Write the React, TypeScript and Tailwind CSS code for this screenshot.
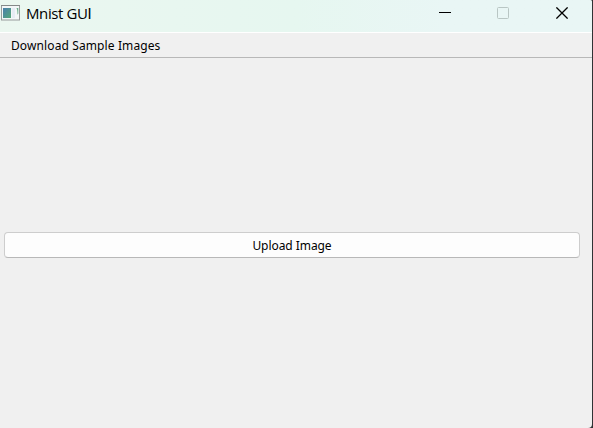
function AppIcon() {
  return (
    <svg className="mb-px ml-px h-[16px] w-[19px] shrink-0" viewBox="0 0 19 16">
      <defs>
        <linearGradient id="pane" x1="0" y1="0" x2="1" y2="1">
          <stop offset="0" stopColor="#4a7fae" />
          <stop offset="1" stopColor="#55a878" />
        </linearGradient>
      </defs>
      <rect x="0.5" y="0.5" width="18" height="14.5" fill="#f3f7f8" stroke="#989c9c" />
      <path d="M0 .5h19" stroke="#858989" />
      <rect x="2" y="3" width="8" height="10" fill="url(#pane)" />
      <rect x="11" y="3" width="3" height="10" fill="#e6ecf5" />
      <path d="M15.5 3h1.8v5.5l-.8 1.2c0-3-.2-5-1-6.7z" fill="#6aae8a" />
    </svg>
  );
}

function TitleBar() {
  return (
    <header className="flex h-8 shrink-0 items-start bg-linear-to-r from-[#ebf7f0] via-[#e6f7f0] via-50% to-[#e9f6f5] to-75%">
      <div className="flex h-[27px] flex-1 items-center">
        <AppIcon />
        <h1 className="ml-1.5 whitespace-nowrap font-['Open_Sans',sans-serif] text-[15px] leading-[27px] tracking-[-0.4px] text-black">
          Mnist GU<span className="font-['Roboto',sans-serif]">I</span>
        </h1>
      </div>
      <div className="flex h-[26px] items-center">
        <button aria-label="Minimize" className="flex h-[26px] w-[58px] items-center justify-center">
          <svg className="h-3 w-3" viewBox="0 0 12 12"><path d="M0 5.5h12" stroke="#000" /></svg>
        </button>
        <button aria-label="Maximize" className="flex h-[26px] w-[58px] items-center justify-center">
          <svg className="h-3 w-3" viewBox="0 0 12 12"><rect x=".5" y=".5" width="11" height="11" rx="1" fill="none" stroke="#b9c6c4" /></svg>
        </button>
        <button aria-label="Close" className="flex h-[26px] w-[60px] items-center justify-center">
          <svg className="h-3 w-3" viewBox="0 0 12 12"><path d="M.4.4l11.2 11.2M11.6.4L.4 11.6" stroke="#000" strokeWidth="1.3" /></svg>
        </button>
      </div>
    </header>
  );
}

export default function App() {
  return (
    <div className="h-[428px] w-[593px] overflow-hidden bg-[#303335]">
      <div className="flex h-full w-[592px] flex-col overflow-hidden rounded-tr-[2px] rounded-br-[4px] bg-[#f0f0f0] font-['Noto_Sans',sans-serif] text-[12px] text-black">
        <TitleBar />
        <nav className="flex h-[26px] shrink-0 items-center border-t border-b border-t-white border-b-[#b8b8b8] pl-[11px]">
          <button className="pt-0.5 whitespace-nowrap leading-[22px] tracking-[0.11px]">Download Sample Images</button>
        </nav>
        <main className="flex flex-1 flex-col pr-3 pl-1 pt-[174px]">
          <button className="h-[26px] w-full rounded-[4px] border border-[#cdcdcd] border-b-[#b8b8b8] bg-[#fdfdfd] pt-0.5 leading-[22px] tracking-[-0.06px]">
            Upload Image
          </button>
        </main>
      </div>
    </div>
  );
}
